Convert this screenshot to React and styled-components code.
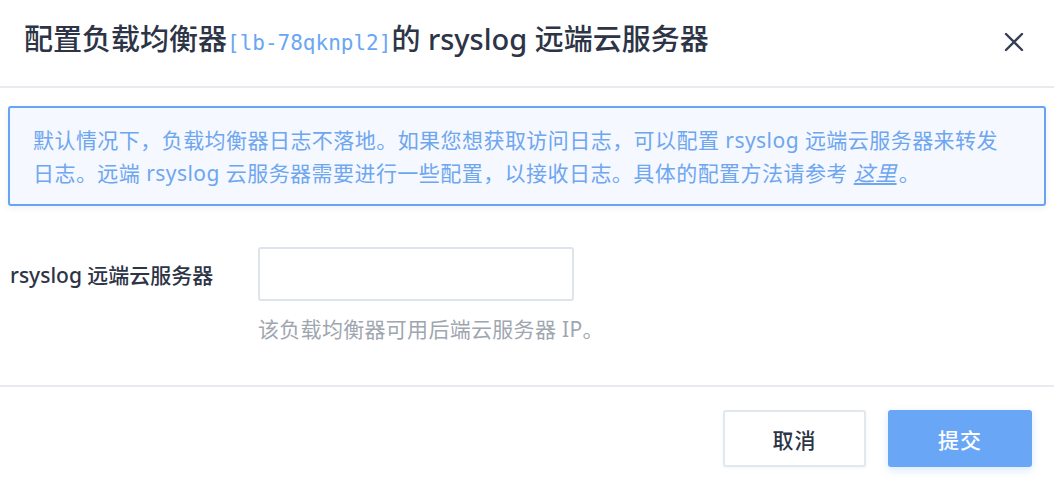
import React from "react";
import styled, { createGlobalStyle } from "styled-components";

const Global = createGlobalStyle`
  html, body { margin: 0; padding: 0; background: #ffffff; }
  body {
    font-family: "Noto Sans", "Noto Sans CJK SC", sans-serif;
    color: #2d3446;
    -webkit-font-smoothing: antialiased;
  }
  * { box-sizing: border-box; }
`;

const Dialog = styled.div`
  width: 1054px;
  height: 478px;
  display: flex;
  flex-direction: column;
  background: #fff;
`;

const Header = styled.div`
  height: 88px;
  display: flex;
  align-items: center;
  justify-content: space-between;
  padding: 0 28px 4px 24px;
  border-bottom: 2px solid #e8ecf1;
`;

const Title = styled.h1`
  margin: 0;
  font-size: 29px;
  font-weight: 500;
  color: #2d3446;
  line-height: 40px;
  white-space: nowrap;
`;

const Mono = styled.span`
  font-family: "DejaVu Sans Mono", "Liberation Mono", monospace;
  font-size: 21px;
  font-weight: 400;
  color: #69a6f6;
`;

const CloseButton = styled.button`
  width: 24px;
  height: 24px;
  padding: 0;
  border: none;
  background: transparent;
  display: flex;
  align-items: center;
  justify-content: center;
  margin-top: 2px;
  cursor: pointer;
`;

const Body = styled.div`
  flex: 1;
  display: flex;
  flex-direction: column;
  padding: 18px 8px 0 8px;
`;

const Alert = styled.div`
  border: 2px solid #68a4f5;
  border-radius: 3px;
  background: #f5f8fe;
  box-shadow: 0 2px 6px rgba(40, 60, 90, 0.08);
  padding: 16px 40px 14px 23px;
  font-size: 21px;
  line-height: 33px;
  letter-spacing: 0.45px;
  color: #6ea6f0;
`;

const Link = styled.a`
  color: #6ea6f0;
  font-style: italic;
  text-decoration: underline;
  padding-right: 2px;
`;

const FormRow = styled.div`
  display: flex;
  align-items: flex-start;
  margin-top: 41px;
  padding-left: 2px;
`;

const Label = styled.label`
  width: 248px;
  flex: none;
  height: 54px;
  display: flex;
  align-items: center;
  font-size: 21px;
  font-weight: 500;
  color: #2d3446;
  white-space: nowrap;
`;

const Field = styled.div`
  display: flex;
  flex-direction: column;
`;

const Input = styled.input`
  width: 316px;
  height: 54px;
  border: 2px solid #dfe3ea;
  border-radius: 3px;
  background: #fff;
  outline: none;
  font-size: 20px;
  padding: 0 12px;
`;

const Hint = styled.div`
  margin-top: 13px;
  font-size: 21px;
  line-height: 30px;
  letter-spacing: 0.3px;
  color: #a0a6b0;
  white-space: nowrap;
`;

const Footer = styled.div`
  height: 93px;
  border-top: 2px solid #e8ecf1;
  display: flex;
  justify-content: flex-end;
  align-items: flex-start;
  gap: 22px;
  padding: 23px 22px 0 0;
`;

const Button = styled.button`
  width: ${(p) => (p.$primary ? "144px" : "143px")};
  height: 57px;
  border-radius: 3px;
  font-family: "Noto Sans", "Noto Sans CJK SC", sans-serif;
  font-size: 21px;
  font-weight: 500;
  letter-spacing: 1px;
  cursor: pointer;
  border: ${(p) => (p.$primary ? "none" : "2px solid #e3e7ee")};
  background: ${(p) => (p.$primary ? "#69a6f6" : "#ffffff")};
  color: ${(p) => (p.$primary ? "#ffffff" : "#2d3446")};
  box-shadow: ${(p) =>
    p.$primary ? "0 3px 8px rgba(105, 166, 246, 0.25)" : "0 1px 3px rgba(40,60,90,0.06)"};
`;

export default function App() {
  return (
    <>
      <Global />
      <Dialog>
        <Header>
          <Title>
            配置负载均衡器<Mono>[lb-78qknpl2]</Mono>的 rsyslog 远端云服务器
          </Title>
          <CloseButton aria-label="close">
            <svg width="20" height="20" viewBox="0 0 20 20">
              <path
                d="M2 2 L18 18 M18 2 L2 18"
                stroke="#363e52"
                strokeWidth="2.4"
                strokeLinecap="round"
              />
            </svg>
          </CloseButton>
        </Header>
        <Body>
          <Alert>
            默认情况下，负载均衡器日志不落地。如果您想获取访问日志，可以配置 rsyslog 远端云服务器来转发日志。远端 rsyslog 云服务器需要进行一些配置，以接收日志。具体的配置方法请参考 <Link>这里</Link>。
          </Alert>
          <FormRow>
            <Label>rsyslog 远端云服务器</Label>
            <Field>
              <Input />
              <Hint>该负载均衡器可用后端云服务器 IP。</Hint>
            </Field>
          </FormRow>
        </Body>
        <Footer>
          <Button>取消</Button>
          <Button $primary>提交</Button>
        </Footer>
      </Dialog>
    </>
  );
}
